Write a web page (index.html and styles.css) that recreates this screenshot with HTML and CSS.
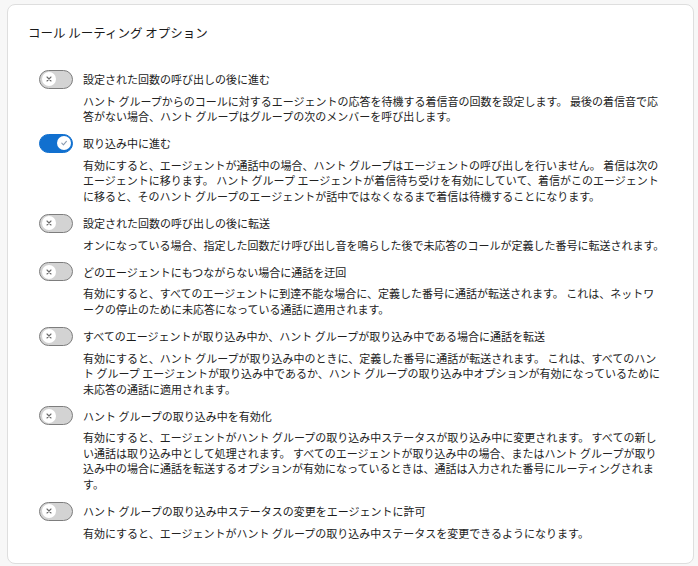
FILE: index.html
```html
<!DOCTYPE html>
<html lang="ja">
<head>
  <meta charset="UTF-8" />
  <meta name="viewport" content="width=device-width, initial-scale=1.0"/>
  <title>コール ルーティング オプション</title>
  <link rel="stylesheet" href="styles.css">
</head>
<body>

  <!-- Call routing card -->
  <div class="card">
    <h2 class="card-title">コール ルーティング オプション</h2>

    <ul class="options">
      <li class="option">
        <div class="option-head">
          <span class="toggle"><span class="knob"><svg viewBox="0 0 10 10"><path d="M3 3l4 4M7 3l-4 4"/></svg></span></span>
          <span class="option-label">設定された回数の呼び出しの後に進む</span>
        </div>
        <p class="option-desc">ハント グループからのコールに対するエージェントの応答を待機する着信音の回数を設定します。 最後の着信音で応答がない場合、ハント グループはグループの次のメンバーを呼び出します。</p>
      </li>

      <li class="option">
        <div class="option-head">
          <span class="toggle on"><span class="knob"><svg viewBox="0 0 10 10"><path d="M2.8 5.2l1.6 1.6 3-3.4"/></svg></span></span>
          <span class="option-label">取り込み中に進む</span>
        </div>
        <p class="option-desc">有効にすると、エージェントが通話中の場合、ハント グループはエージェントの呼び出しを行いません。 着信は次のエージェントに移ります。 ハント グループ エージェントが着信待ち受けを有効にしていて、着信がこのエージェントに移ると、そのハント グループのエージェントが話中ではなくなるまで着信は待機することになります。</p>
      </li>

      <li class="option">
        <div class="option-head">
          <span class="toggle"><span class="knob"><svg viewBox="0 0 10 10"><path d="M3 3l4 4M7 3l-4 4"/></svg></span></span>
          <span class="option-label">設定された回数の呼び出しの後に転送</span>
        </div>
        <p class="option-desc">オンになっている場合、指定した回数だけ呼び出し音を鳴らした後で未応答のコールが定義した番号に転送されます。</p>
      </li>

      <li class="option">
        <div class="option-head">
          <span class="toggle"><span class="knob"><svg viewBox="0 0 10 10"><path d="M3 3l4 4M7 3l-4 4"/></svg></span></span>
          <span class="option-label">どのエージェントにもつながらない場合に通話を迂回</span>
        </div>
        <p class="option-desc">有効にすると、すべてのエージェントに到達不能な場合に、定義した番号に通話が転送されます。 これは、ネットワークの停止のために未応答になっている通話に適用されます。</p>
      </li>

      <li class="option">
        <div class="option-head">
          <span class="toggle"><span class="knob"><svg viewBox="0 0 10 10"><path d="M3 3l4 4M7 3l-4 4"/></svg></span></span>
          <span class="option-label">すべてのエージェントが取り込み中か、ハント グループが取り込み中である場合に通話を転送</span>
        </div>
        <p class="option-desc">有効にすると、ハント グループが取り込み中のときに、定義した番号に通話が転送されます。 これは、すべてのハント グループ エージェントが取り込み中であるか、ハント グループの取り込み中オプションが有効になっているために未応答の通話に適用されます。</p>
      </li>

      <li class="option">
        <div class="option-head">
          <span class="toggle"><span class="knob"><svg viewBox="0 0 10 10"><path d="M3 3l4 4M7 3l-4 4"/></svg></span></span>
          <span class="option-label">ハント グループの取り込み中を有効化</span>
        </div>
        <p class="option-desc">有効にすると、エージェントがハント グループの取り込み中ステータスが取り込み中に変更されます。 すべての新しい通話は取り込み中として処理されます。 すべてのエージェントが取り込み中の場合、またはハント グループが取り込み中の場合に通話を転送するオプションが有効になっているときは、通話は入力された番号にルーティングされます。</p>
      </li>

      <li class="option">
        <div class="option-head">
          <span class="toggle"><span class="knob"><svg viewBox="0 0 10 10"><path d="M3 3l4 4M7 3l-4 4"/></svg></span></span>
          <span class="option-label">ハント グループの取り込み中ステータスの変更をエージェントに許可</span>
        </div>
        <p class="option-desc">有効にすると、エージェントがハント グループの取り込み中ステータスを変更できるようになります。</p>
      </li>
    </ul>
  </div>

</body>
</html>
```

FILE: styles.css
```css
* {
  box-sizing: border-box;
}

body {
  margin: 0;
  font-family: "Noto Sans CJK JP", "Noto Sans", sans-serif;
  background-color: #f7f7f7;
  color: #1f1f1f;
}

/* Card */
.card {
  margin: 4px 4px 5px 7px;
  background-color: #fff;
  border: 1px solid #dedede;
  border-radius: 8px;
  padding: 20px 20px 22px 20px;
}

.card-title {
  margin: 0;
  font-size: 12.5px;
  font-weight: 400;
  line-height: 16px;
  color: #1a1a1a;
}

/* Option list */
.options {
  list-style: none;
  margin: 28px 0 0 0;
  padding: 0 0 0 11px;
}

.option + .option {
  margin-top: 8.8px;
}

.option-head {
  display: flex;
  align-items: center;
  gap: 10px;
  height: 20px;
}

.option-label {
  font-size: 11px;
  line-height: 20px;
  color: #1a1a1a;
}

.option-desc {
  margin: 4.5px 0 0 44px;
  max-width: 582px;
  font-size: 11px;
  line-height: 15.5px;
  color: #222;
}

/* Toggle */
.toggle {
  flex: none;
  position: relative;
  width: 34px;
  height: 19px;
  border-radius: 10px;
  background-color: #d3d3d3;
  border: 1px solid #7d7d7d;
}

.toggle .knob {
  position: absolute;
  top: 1.5px;
  left: 1.5px;
  width: 14px;
  height: 14px;
  border-radius: 50%;
  background-color: #fff;
  display: flex;
  align-items: center;
  justify-content: center;
}

.toggle .knob svg {
  width: 10px;
  height: 10px;
  fill: none;
  stroke: #6a6a6a;
  stroke-width: 1.1;
  stroke-linecap: round;
  stroke-linejoin: round;
}

.toggle.on {
  background-color: #1170cf;
  border-color: #1170cf;
}

.toggle.on .knob {
  left: auto;
  right: 1.5px;
}

.toggle.on .knob svg {
  stroke: #8a9bb0;
}
```
